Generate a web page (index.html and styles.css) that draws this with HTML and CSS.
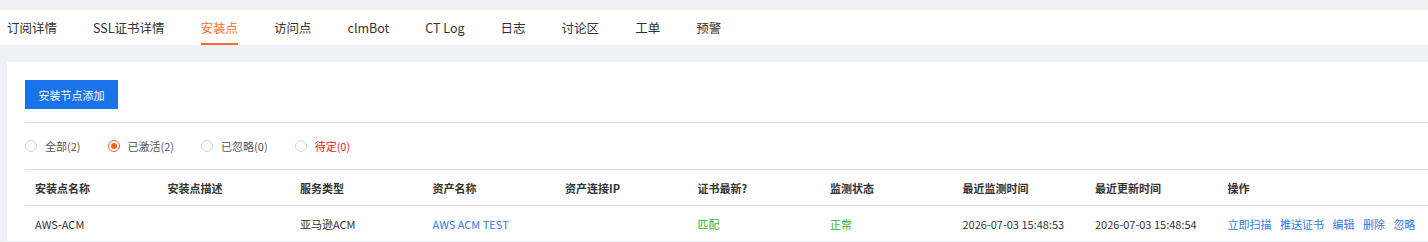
FILE: index.html
```html
<!DOCTYPE html>
<html lang="zh-CN">
<head>
    <meta charset="UTF-8">
    <title>安装点</title>
    <link rel="stylesheet" href="styles.css">
</head>
<body>

    <div class="tabs">
        <span class="tab">订阅详情</span>
        <span class="tab">SSL证书详情</span>
        <span class="tab active">安装点</span>
        <span class="tab">访问点</span>
        <span class="tab">clmBot</span>
        <span class="tab">CT Log</span>
        <span class="tab">日志</span>
        <span class="tab">讨论区</span>
        <span class="tab">工单</span>
        <span class="tab">预警</span>
    </div>

    <div class="card">
        <div class="toolbar">
            <button class="add-btn">安装节点添加</button>
        </div>

        <div class="filters">
            <label class="radio"><span class="dot"></span>全部(2)</label>
            <label class="radio checked"><span class="dot"></span>已激活(2)</label>
            <label class="radio"><span class="dot"></span>已忽略(0)</label>
            <label class="radio pending"><span class="dot"></span>待定(0)</label>
        </div>

        <table class="list">
            <thead>
                <tr>
                    <th>安装点名称</th>
                    <th>安装点描述</th>
                    <th>服务类型</th>
                    <th>资产名称</th>
                    <th>资产连接IP</th>
                    <th>证书最新?</th>
                    <th>监测状态</th>
                    <th>最近监测时间</th>
                    <th>最近更新时间</th>
                    <th class="ops-col">操作</th>
                </tr>
            </thead>
            <tbody>
                <tr>
                    <td>AWS-ACM</td>
                    <td></td>
                    <td>亚马逊ACM</td>
                    <td><a class="link">AWS ACM TEST</a></td>
                    <td></td>
                    <td class="ok">匹配</td>
                    <td class="ok">正常</td>
                    <td>2026-07-03 15:48:53</td>
                    <td>2026-07-03 15:48:54</td>
                    <td class="ops">
                        <a class="link">立即扫描</a>
                        <a class="link">推送证书</a>
                        <a class="link">编辑</a>
                        <a class="link">删除</a>
                        <a class="link">忽略</a>
                    </td>
                </tr>
            </tbody>
        </table>
    </div>

</body>
</html>
```

FILE: styles.css
```css
body {
    margin: 0;
    padding: 10px 0 0;
    background-color: #f0f1f5;
    font-family: "Noto Sans CJK SC", "Noto Sans", sans-serif;
    color: #333;
    overflow: hidden;
}
.tabs {
    display: flex;
    gap: 36px;
    height: 35px;
    padding: 0 7px;
    background: white;
}
.tab {
    display: flex;
    align-items: center;
    font-size: 12.5px;
    color: #333;
    border-bottom: 2px solid transparent;
    padding-top: 2px;
}
.tab.active {
    color: #ff6a2a;
    border-bottom-color: #ff6a2a;
}
.card {
    margin: 17px 0 0 7px;
    padding: 18px 0 0 18px;
    background: white;
}
.toolbar {
    padding-bottom: 13px;
    border-bottom: 1px solid #ddd;
}
.add-btn {
    height: 29px;
    width: 93px;
    border: none;
    border-radius: 0;
    background-color: #1a73e8;
    color: white;
    font-family: inherit;
    font-size: 11px;
    padding: 0;
}
.filters {
    display: flex;
    align-items: center;
    height: 46px;
}
.radio {
    display: flex;
    align-items: center;
    font-size: 11px;
    color: #555;
    margin-right: 27px;
}
.radio .dot {
    width: 12px;
    height: 12px;
    border: 1px solid #d3d3d3;
    border-radius: 50%;
    margin-right: 8px;
    box-sizing: border-box;
    display: flex;
    align-items: center;
    justify-content: center;
}
.radio.checked .dot {
    border-color: #f0642a;
}
.radio.checked .dot::after {
    content: "";
    width: 6px;
    height: 6px;
    border-radius: 50%;
    background: #f0642a;
}
.radio.pending {
    color: #e8202a;
}
.list {
    width: 1403px;
    table-layout: fixed;
    border-collapse: collapse;
    font-size: 11px;
    border-top: 1px solid #ddd;
}
.list th, .list td {
    width: 122.5px;
    text-align: left;
    padding: 0 0 0 10px;
    height: 35px;
    white-space: nowrap;
}
.list th {
    font-weight: bold;
    color: #333;
    border-bottom: 1px solid #ddd;
}
.list th.ops-col {
    width: 200.5px;
}
.link {
    color: #2f7be8;
    cursor: pointer;
}
.ops .link {
    margin-right: 6px;
}
.ok {
    color: #2fb32f;
}
```
